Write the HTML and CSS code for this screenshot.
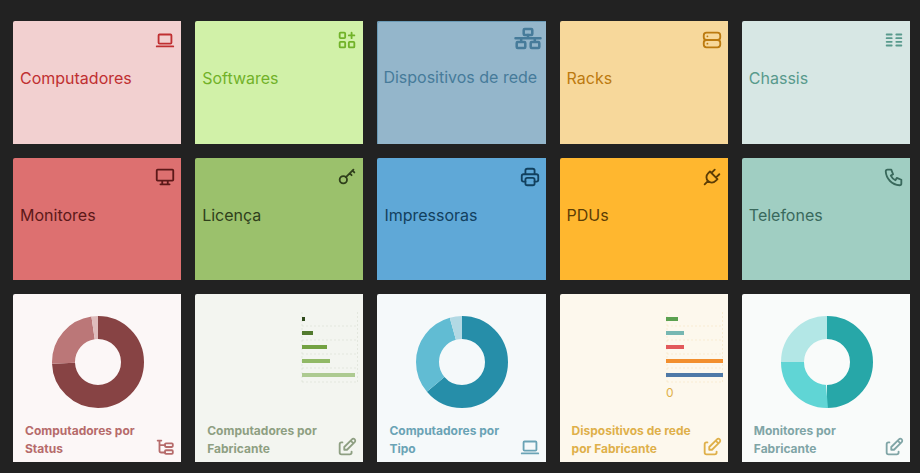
FILE: index.html
```html
<!DOCTYPE html>
<html lang="pt-BR">
<head>
<meta charset="utf-8">
<title>Painel</title>
<link rel="stylesheet" href="styles.css">
</head>
<body>
<main class="dashboard">
  <a class="card tile computers" href="#">
    <svg class="icon" viewBox="0 0 24 24" aria-hidden="true"><path d="M3 19h18M5 7a1 1 0 0 1 1-1h12a1 1 0 0 1 1 1v8a1 1 0 0 1-1 1H6a1 1 0 0 1-1-1z"/></svg>
    <span class="tile-label">Computadores</span>
  </a>
  <a class="card tile software" href="#">
    <svg class="icon" viewBox="0 0 24 24" aria-hidden="true"><rect x="4" y="4" width="6" height="6" rx="1"/><rect x="4" y="14" width="6" height="6" rx="1"/><rect x="14" y="14" width="6" height="6" rx="1"/><path d="M14 7h6M17 4v6"/></svg>
    <span class="tile-label">Softwares</span>
  </a>
  <a class="card tile network" href="#">
    <svg class="icon icon-wide" viewBox="0 0 28 23" aria-hidden="true"><path d="M1.5 11.300h25M14 8v3.300M7.200 11.300v3.500M20.800 11.300v3.500"/><rect x="9.700" y="2" width="8.600" height="6" rx="1"/><rect x="2.700" y="15" width="8.600" height="6" rx="1"/><rect x="16.700" y="15" width="8.600" height="6" rx="1"/></svg>
    <span class="tile-label">Dispositivos de rede</span>
  </a>
  <a class="card tile racks" href="#">
    <svg class="icon" viewBox="0 0 24 24" aria-hidden="true"><rect x="3" y="4" width="18" height="8" rx="3"/><rect x="3" y="12" width="18" height="8" rx="3"/><path d="M7 8v.01M7 16v.01"/></svg>
    <span class="tile-label">Racks</span>
  </a>
  <a class="card tile chassis" href="#">
    <svg class="icon" viewBox="0 0 24 24" aria-hidden="true"><path d="M4 6h5.500M4 10h5.500M4 14h5.500M4 18h5.500M14.500 6H20M14.500 10H20M14.500 14H20M14.500 18H20"/></svg>
    <span class="tile-label">Chassis</span>
  </a>

  <a class="card tile monitors" href="#">
    <svg class="icon" viewBox="0 0 24 24" aria-hidden="true"><path d="M3 5a1 1 0 0 1 1-1h16a1 1 0 0 1 1 1v10a1 1 0 0 1-1 1H4a1 1 0 0 1-1-1zM7 20h10M9 16v4M15 16v4"/></svg>
    <span class="tile-label">Monitores</span>
  </a>
  <a class="card tile licenses" href="#">
    <svg class="icon" viewBox="0 0 24 24" aria-hidden="true"><circle cx="8" cy="15" r="4"/><path d="M10.850 12.150L19 4M18 5l2 2M15 8l2 2"/></svg>
    <span class="tile-label">Licença</span>
  </a>
  <a class="card tile printers" href="#">
    <svg class="icon" viewBox="0 0 24 24" aria-hidden="true"><path d="M17 17h2a2 2 0 0 0 2-2v-4a2 2 0 0 0-2-2H5a2 2 0 0 0-2 2v4a2 2 0 0 0 2 2h2M17 9V5a2 2 0 0 0-2-2H9a2 2 0 0 0-2 2v4"/><rect x="7" y="13" width="10" height="8" rx="2"/></svg>
    <span class="tile-label">Impressoras</span>
  </a>
  <a class="card tile pdus" href="#">
    <svg class="icon" viewBox="0 0 24 24" aria-hidden="true"><path d="M9.785 6L18 14.215l-2.054 2.054a5.810 5.810 0 1 1-8.215-8.215zM4 20l3.500-3.500M15 4l-3.500 3.500M20 9l-3.500 3.500"/></svg>
    <span class="tile-label">PDUs</span>
  </a>
  <a class="card tile phones" href="#">
    <svg class="icon" viewBox="0 0 24 24" aria-hidden="true"><path d="M5 4h4l2 5-2.500 1.500a11 11 0 0 0 5 5L15 13l5 2v4a2 2 0 0 1-2 2A16 16 0 0 1 3 6a2 2 0 0 1 2-2"/></svg>
    <span class="tile-label">Telefones</span>
  </a>

  <a class="card chart by-status" href="#">
    <svg class="donut" viewBox="0 0 92 92" aria-hidden="true">
      <circle class="slice-a" cx="46" cy="46" r="34.5" pathLength="100" stroke-dasharray="74.4 100"/>
      <circle class="slice-b" cx="46" cy="46" r="34.5" pathLength="100" stroke-dasharray="23.3 100" stroke-dashoffset="-74.4"/>
      <circle class="slice-c" cx="46" cy="46" r="34.5" pathLength="100" stroke-dasharray="2.3 100" stroke-dashoffset="-97.7"/>
    </svg>
    <span class="chart-footer">
      <span class="chart-label">Computadores por Status</span>
      <svg class="icon" viewBox="0 0 24 24" aria-hidden="true"><path d="M4 5h4M6 5v11a2 2 0 0 0 2 2h4M6 10h6"/><rect x="12" y="8" width="8.500" height="4" rx="1"/><rect x="12" y="15.500" width="8.500" height="4" rx="1"/></svg>
    </span>
  </a>
  <a class="card chart by-maker" href="#">
    <svg class="bars" viewBox="0 0 57 92" aria-hidden="true">
      <path class="grid-line" d="M1 10H56M1 24H56M1 38H56M1 52H56M1 66H56M1 -4V66M56.500 -4V66"/>
      <rect x="1" y="1" width="3" height="4" fill="#2f4a1c"/>
      <rect x="1" y="15" width="11" height="4" fill="#527a2e"/>
      <rect x="1" y="29" width="25" height="4" fill="#73a242"/>
      <rect x="1" y="43" width="28" height="4" fill="#91b966"/>
      <rect x="1" y="57" width="53" height="4" fill="#adca91"/>
    </svg>
    <span class="chart-footer">
      <span class="chart-label">Computadores por Fabricante</span>
      <svg class="icon" viewBox="0 0 24 24" aria-hidden="true"><path d="M7 7H6a2 2 0 0 0-2 2v9a2 2 0 0 0 2 2h9a2 2 0 0 0 2-2v-1M20.385 6.585a2.100 2.100 0 0 0-2.970-2.970L9 12v3h3zM16 5l3 3"/></svg>
    </span>
  </a>
  <a class="card chart by-type" href="#">
    <svg class="donut" viewBox="0 0 92 92" aria-hidden="true">
      <circle class="slice-a" cx="46" cy="46" r="34.5" pathLength="100" stroke-dasharray="63.8 100"/>
      <circle class="slice-b" cx="46" cy="46" r="34.5" pathLength="100" stroke-dasharray="31.9 100" stroke-dashoffset="-63.8"/>
      <circle class="slice-c" cx="46" cy="46" r="34.5" pathLength="100" stroke-dasharray="4.3 100" stroke-dashoffset="-95.7"/>
    </svg>
    <span class="chart-footer">
      <span class="chart-label">Computadores por Tipo</span>
      <svg class="icon" viewBox="0 0 24 24" aria-hidden="true"><path d="M3 19h18M5 7a1 1 0 0 1 1-1h12a1 1 0 0 1 1 1v8a1 1 0 0 1-1 1H6a1 1 0 0 1-1-1z"/></svg>
    </span>
  </a>
  <a class="card chart network-by-maker" href="#">
    <svg class="bars" viewBox="0 0 57 92" aria-hidden="true">
      <path class="grid-line" d="M1 10H56M1 24H56M1 38H56M1 52H56M1 66H56M1 -4V66M56.500 -4V66"/>
      <rect x="0" y="1" width="12" height="4" fill="#5ba150"/>
      <rect x="0" y="15" width="18" height="4" fill="#77b7b2"/>
      <rect x="0" y="29" width="18" height="4" fill="#e2595b"/>
      <rect x="0" y="43" width="57" height="4" fill="#f28f2e"/>
      <rect x="0" y="57" width="57" height="4" fill="#4f79a7"/>
      <text class="axis-label" x="0" y="81">0</text>
    </svg>
    <span class="chart-footer">
      <span class="chart-label">Dispositivos de rede por Fabricante</span>
      <svg class="icon" viewBox="0 0 24 24" aria-hidden="true"><path d="M7 7H6a2 2 0 0 0-2 2v9a2 2 0 0 0 2 2h9a2 2 0 0 0 2-2v-1M20.385 6.585a2.100 2.100 0 0 0-2.970-2.970L9 12v3h3zM16 5l3 3"/></svg>
    </span>
  </a>
  <a class="card chart monitors-by-maker" href="#">
    <svg class="donut" viewBox="0 0 92 92" aria-hidden="true">
      <circle class="slice-a" cx="46" cy="46" r="34.5" pathLength="100" stroke-dasharray="50 100"/>
      <circle class="slice-b" cx="46" cy="46" r="34.5" pathLength="100" stroke-dasharray="25 100" stroke-dashoffset="-50"/>
      <circle class="slice-c" cx="46" cy="46" r="34.5" pathLength="100" stroke-dasharray="25 100" stroke-dashoffset="-75"/>
    </svg>
    <span class="chart-footer">
      <span class="chart-label">Monitores por Fabricante</span>
      <svg class="icon" viewBox="0 0 24 24" aria-hidden="true"><path d="M7 7H6a2 2 0 0 0-2 2v9a2 2 0 0 0 2 2h9a2 2 0 0 0 2-2v-1M20.385 6.585a2.100 2.100 0 0 0-2.970-2.970L9 12v3h3zM16 5l3 3"/></svg>
    </span>
  </a>
</main>
</body>
</html>
```
FILE: styles.css
```css
* { box-sizing: border-box; }

body {
  margin: 0;
  background: #222222;
  font-family: Inter, "Liberation Sans", sans-serif;
}

.dashboard {
  display: grid;
  grid-template-columns: repeat(5, minmax(0, 1fr));
  grid-template-rows: minmax(123px, auto) minmax(122px, auto) auto;
  gap: 14px;
  padding: 21px 10px 11px 13px;
}

.card {
  display: flex;
  flex-direction: column;
  border-radius: 2px 0 0 0;
  text-decoration: none;
}

.icon {
  flex: none;
  width: 22px;
  height: 22px;
  fill: none;
  stroke: currentColor;
  stroke-width: 2;
  stroke-linecap: round;
  stroke-linejoin: round;
}

.icon-wide {
  width: 28px;
  height: 23px;
  stroke-width: 2.5;
}

/* Count tiles */
.tile { padding: 8px 5px 8px 7px; }
.tile .icon { align-self: flex-end; }

.tile-label {
  margin-top: 15px;
  font-size: 16px;
  font-weight: 400;
  line-height: 24px;
  white-space: nowrap;
}

.computers { background: #f2d0d0; color: #c02f31; }
.software { background: #d1f1a8; color: #71b228; }
.network {
  padding: 6px 4px 8px 6px;
  background: #94b6cb;
  color: #467b9a;
  box-shadow: inset 1px 1px 0 #6b9bb7;
}
.racks { background: #f7d89b; color: #bc7a0f; }
.chassis { background: #d7e7e4; color: #589a8c; }
.monitors { background: #dd7070; color: #5c1818; }
.licenses { background: #9bc16c; color: #2f3f1b; }
.printers { background: #5fa8d7; color: #12405e; }
.pdus { background: #ffb72f; color: #5c3d05; }
.phones { background: #a0cec2; color: #39695c; }

/* Chart cards */
.chart { padding: 22px 5px 4px 12px; }

.donut {
  width: 92px;
  height: 92px;
  margin-right: 5px;
  align-self: center;
  fill: none;
  stroke-width: 23;
  transform: rotate(-90deg);
}

.slice-a { stroke: var(--a); }
.slice-b { stroke: var(--b); }
.slice-c { stroke: var(--c); }

.bars {
  width: 57px;
  height: 92px;
  align-self: flex-end;
  overflow: visible;
}

.grid-line {
  fill: none;
  stroke: currentColor;
  stroke-dasharray: 2 2;
  opacity: 0.16;
}

.axis-label {
  fill: currentColor;
  font-size: 12px;
  font-weight: 400;
}

.chart-footer {
  display: flex;
  align-items: flex-end;
  gap: 4px;
  margin-top: 14px;
}

.chart-label {
  flex: 1;
  font-size: 12px;
  font-weight: 700;
  line-height: 18px;
}

.by-status { --a: #874344; --b: #bb7778; --c: #dfbcbc; background: #fcf7f7; color: #b66b6b; }
.by-maker { background: #f3f5f0; color: #8e9f82; }
.by-type { --a: #268ea9; --b: #61bcd3; --c: #b2d9e4; background: #f5f9fa; color: #6aa3b5; }
.network-by-maker { background: #fdf8ed; color: #dfb04a; }
.monitors-by-maker { --a: #27a7a8; --b: #60d5d5; --c: #b3e7e6; background: #f9fbfa; color: #80a5a6; }
```
